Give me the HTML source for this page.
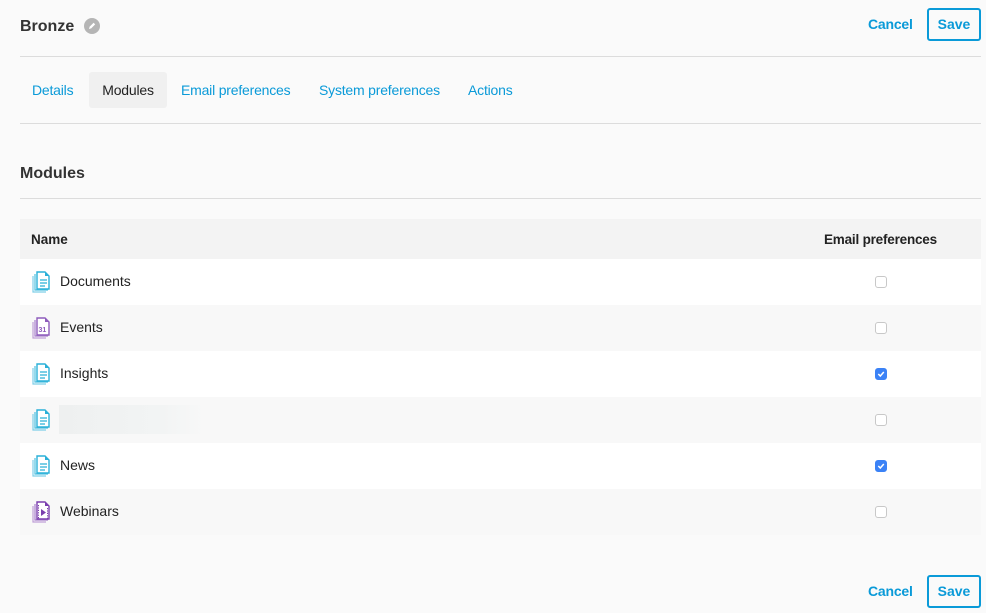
<!DOCTYPE html>
<html><head><style>
*{box-sizing:border-box;margin:0;padding:0}
body{width:986px;height:613px;background:#fafafa;font-family:"Liberation Sans",sans-serif;color:#222;position:relative;overflow:hidden}
.a{position:absolute}
.blue{color:#0a9ad8}
.hr{position:absolute;left:20px;width:961px;height:1px;background:#dcdcdc}
.btn{position:absolute;border:2px solid #0a9ad8;border-radius:3px;color:#0a9ad8;font-weight:bold;font-size:14px;text-align:center}
.tab{position:absolute;top:72px;height:36px;line-height:36px;font-size:14px;color:#0a9ad8;letter-spacing:-0.2px}
.row{position:absolute;left:20px;width:961px;height:46px;font-size:14px}
.row .t{position:absolute;left:40px;top:14px;color:#222}
.row svg{position:absolute;left:10px;top:12px}
.cb{position:absolute;left:855px;top:17px;width:12px;height:12px;border:1px solid #c8c8c8;border-radius:3px;background:#fff}
.cb.on{background:#3b82f6;border-color:#3b82f6}
</style></head><body>
<div class="a" style="left:20px;top:18px;font-size:16px;font-weight:bold;color:#333">Bronze</div>
<svg class="a" style="left:84px;top:18px" width="16" height="16" viewBox="0 0 16 16"><circle cx="8" cy="8" r="8" fill="#b5b5b5"/><path d="M5 11l.6-2.2 4-4 1.6 1.6-4 4z" fill="#fff"/></svg>
<div class="a blue" style="left:868px;top:16px;font-size:14px;font-weight:bold;letter-spacing:-0.2px">Cancel</div>
<div class="btn" style="left:927px;top:8px;width:54px;height:33px;line-height:29px">Save</div>
<div class="hr" style="top:56px"></div>
<div class="tab" style="left:32px">Details</div>
<div class="tab" style="left:89px;width:78px;background:#f0f0f0;border-radius:3px;color:#222;text-align:center">Modules</div>
<div class="tab" style="left:181px">Email preferences</div>
<div class="tab" style="left:319px">System preferences</div>
<div class="tab" style="left:468px">Actions</div>
<div class="hr" style="top:123px"></div>
<div class="a" style="left:20px;top:165px;font-size:16px;font-weight:bold;color:#333">Modules</div>
<div class="hr" style="top:198px"></div>
<div class="row" style="top:219px;height:40px;background:#f3f3f3;font-weight:bold;font-size:13.5px"><span class="a" style="left:11px;top:13px">Name</span><span class="a" style="left:804px;top:13px;letter-spacing:-0.2px">Email preferences</span></div>

<div class="row" style="top:259px;background:#fff"><svg width="22" height="24" viewBox="0 0 22 24"><path d="M3 5v16h13" fill="none" stroke="#7fcfe8" stroke-width="1.2"/><path d="M5 3v16h13" fill="none" stroke="#4fc0e0" stroke-width="1.2"/><path d="M7 1h8l4 4v13H7z" fill="#fff" stroke="#2ab0d8" stroke-width="1.4"/><path d="M15 1v4h4" fill="#2ab0d8"/><path d="M10 9h7M10 12h7M10 15h5" stroke="#2ab0d8" stroke-width="1.3"/></svg><span class="t">Documents</span><div class="cb"></div></div>
<div class="row" style="top:305px;background:#f8f8f8"><svg width="22" height="24" viewBox="0 0 22 24"><path d="M3 5v16h13" fill="none" stroke="#c0a0d8" stroke-width="1.2"/><path d="M5 3v16h13" fill="none" stroke="#a880cc" stroke-width="1.2"/><path d="M7 1h8l4 4v13H7z" fill="#fff" stroke="#8e5cbc" stroke-width="1.4"/><path d="M15 1v4h4" fill="#8e5cbc"/><text x="8.5" y="15" font-size="7" font-weight="bold" fill="#8e5cbc" font-family="Liberation Sans">31</text></svg><span class="t">Events</span><div class="cb"></div></div>
<div class="row" style="top:351px;background:#fff"><svg width="22" height="24" viewBox="0 0 22 24"><path d="M3 5v16h13" fill="none" stroke="#7fcfe8" stroke-width="1.2"/><path d="M5 3v16h13" fill="none" stroke="#4fc0e0" stroke-width="1.2"/><path d="M7 1h8l4 4v13H7z" fill="#fff" stroke="#2ab0d8" stroke-width="1.4"/><path d="M15 1v4h4" fill="#2ab0d8"/><path d="M10 9h7M10 12h7M10 15h5" stroke="#2ab0d8" stroke-width="1.3"/></svg><span class="t">Insights</span><div class="cb on"><svg width="10" height="10" viewBox="0 0 10 10" style="position:absolute;left:0;top:0"><path d="M2.3 5l2 2L7.8 3" fill="none" stroke="#fff" stroke-width="1.5"/></svg></div></div>
<div class="row" style="top:397px;background:#f8f8f8"><svg width="22" height="24" viewBox="0 0 22 24"><path d="M3 5v16h13" fill="none" stroke="#7fcfe8" stroke-width="1.2"/><path d="M5 3v16h13" fill="none" stroke="#4fc0e0" stroke-width="1.2"/><path d="M7 1h8l4 4v13H7z" fill="#fff" stroke="#2ab0d8" stroke-width="1.4"/><path d="M15 1v4h4" fill="#2ab0d8"/><path d="M10 9h7M10 12h7M10 15h5" stroke="#2ab0d8" stroke-width="1.3"/></svg><div class="a" style="left:39px;top:8px;width:146px;height:29px;background:linear-gradient(90deg,#eef0f0,#f2f4f4 70%,#f8f8f8)"></div><div class="cb"></div></div>
<div class="row" style="top:443px;background:#fff"><svg width="22" height="24" viewBox="0 0 22 24"><path d="M3 5v16h13" fill="none" stroke="#7fcfe8" stroke-width="1.2"/><path d="M5 3v16h13" fill="none" stroke="#4fc0e0" stroke-width="1.2"/><path d="M7 1h8l4 4v13H7z" fill="#fff" stroke="#2ab0d8" stroke-width="1.4"/><path d="M15 1v4h4" fill="#2ab0d8"/><path d="M10 9h7M10 12h7M10 15h5" stroke="#2ab0d8" stroke-width="1.3"/></svg><span class="t">News</span><div class="cb on"><svg width="10" height="10" viewBox="0 0 10 10" style="position:absolute;left:0;top:0"><path d="M2.3 5l2 2L7.8 3" fill="none" stroke="#fff" stroke-width="1.5"/></svg></div></div>
<div class="row" style="top:489px;background:#f8f8f8"><svg width="22" height="24" viewBox="0 0 22 24"><path d="M3 5v16h13" fill="none" stroke="#c0a0d8" stroke-width="1.2"/><path d="M5 3v16h13" fill="none" stroke="#a880cc" stroke-width="1.2"/><path d="M7 1h8l4 4v13H7z" fill="#fff" stroke="#7a3fae" stroke-width="1.4"/><path d="M15 1v4h4" fill="#7a3fae"/><path d="M11 8v7l5-3.5z" fill="#7a3fae"/><path d="M8.5 4v14M17.5 7v11" stroke="#7a3fae" stroke-width="1" stroke-dasharray="1.2 1.2"/></svg><span class="t">Webinars</span><div class="cb"></div></div>

<div class="a blue" style="left:868px;top:583px;font-size:14px;font-weight:bold;letter-spacing:-0.2px">Cancel</div>
<div class="btn" style="left:927px;top:575px;width:54px;height:33px;line-height:29px">Save</div>
</body></html>
